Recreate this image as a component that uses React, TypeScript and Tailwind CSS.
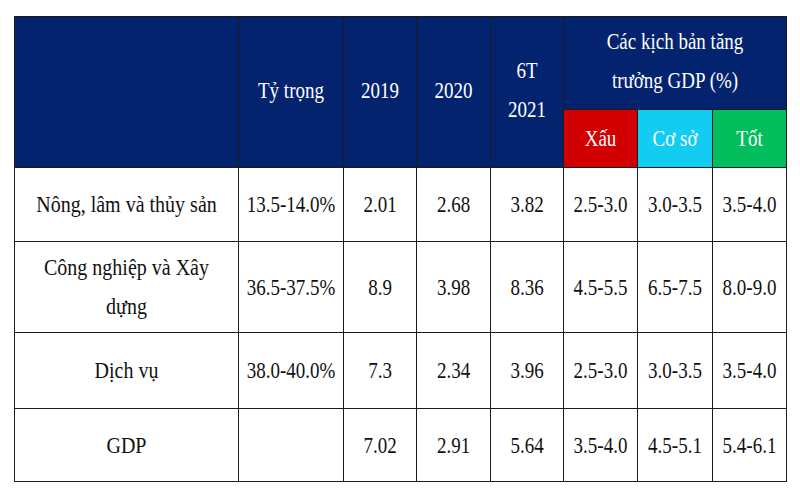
const rows = [
  { name: ["Nông, lâm và thủy sản"], share: "13.5-14.0%", y19: "2.01", y20: "2.68", h21: "3.82", bad: "2.5-3.0", base: "3.0-3.5", good: "3.5-4.0", h: "h-[74px]" },
  { name: ["Công nghiệp và Xây", "dựng"], share: "36.5-37.5%", y19: "8.9", y20: "3.98", h21: "8.36", bad: "4.5-5.5", base: "6.5-7.5", good: "8.0-9.0", h: "h-[91px]" },
  { name: ["Dịch vụ"], share: "38.0-40.0%", y19: "7.3", y20: "2.34", h21: "3.96", bad: "2.5-3.0", base: "3.0-3.5", good: "3.5-4.0", h: "h-[76px]" },
  { name: ["GDP"], share: "", y19: "7.02", y20: "2.91", h21: "5.64", bad: "3.5-4.0", base: "4.5-5.1", good: "5.4-6.1", h: "h-[73px]" },
];

const cell = "border border-[#1c1c1c] text-center align-middle p-0";

function T({ children }: { children: React.ReactNode }) {
  return <span className="inline-block scale-y-[1.18] origin-center">{children}</span>;
}

export default function App() {
  return (
    <div className="w-[800px] h-[500px] bg-white pt-[16px] pl-[14px] font-['Liberation_Serif',serif] text-[19px] leading-[33px] text-[#111]">
      <table className="table-fixed border-collapse w-[772px]">
        <colgroup>
          <col className="w-[224px]" />
          <col className="w-[105px]" />
          <col className="w-[73px]" />
          <col className="w-[74px]" />
          <col className="w-[73px]" />
          <col className="w-[74px]" />
          <col className="w-[75px]" />
          <col className="w-[74px]" />
        </colgroup>
        <thead className="text-white">
          <tr className="h-[93px]">
            <th rowSpan={2} className={`${cell} bg-[#03236f] font-normal`}></th>
            <th rowSpan={2} className={`${cell} bg-[#03236f] font-normal pb-1`}>
              <T>Tỷ trọng</T>
            </th>
            <th rowSpan={2} className={`${cell} bg-[#03236f] font-normal pb-1`}>
              <T>2019</T>
            </th>
            <th rowSpan={2} className={`${cell} bg-[#03236f] font-normal pb-1`}>
              <T>2020</T>
            </th>
            <th rowSpan={2} className={`${cell} bg-[#03236f] font-normal pb-1`}>
              <T>
                6T
                <br />
                2021
              </T>
            </th>
            <th colSpan={3} className={`${cell} bg-[#03236f] font-normal pb-1`}>
              <T>
                Các kịch bản tăng
                <br />
                trưởng GDP (%)
              </T>
            </th>
          </tr>
          <tr className="h-[58px]">
            <th className={`${cell} bg-[#d20000] font-normal`}>
              <T>Xấu</T>
            </th>
            <th className={`${cell} bg-[#12ccf2] font-normal`}>
              <T>Cơ sở</T>
            </th>
            <th className={`${cell} bg-[#03be5c] font-normal`}>
              <T>Tốt</T>
            </th>
          </tr>
        </thead>
        <tbody>
          {rows.map((r) => (
            <tr key={r.name.join(" ")} className={r.h}>
              <td className={cell}>
                <span className="inline-block scale-y-[1.18] origin-center text-[20px]">
                  {r.name.map((line, i) => (
                    <div key={i}>{line}</div>
                  ))}
                </span>
              </td>
              <td className={cell}>
                <T>{r.share}</T>
              </td>
              <td className={cell}>
                <T>{r.y19}</T>
              </td>
              <td className={cell}>
                <T>{r.y20}</T>
              </td>
              <td className={cell}>
                <T>{r.h21}</T>
              </td>
              <td className={cell}>
                <T>{r.bad}</T>
              </td>
              <td className={cell}>
                <T>{r.base}</T>
              </td>
              <td className={cell}>
                <T>{r.good}</T>
              </td>
            </tr>
          ))}
        </tbody>
      </table>
    </div>
  );
}
